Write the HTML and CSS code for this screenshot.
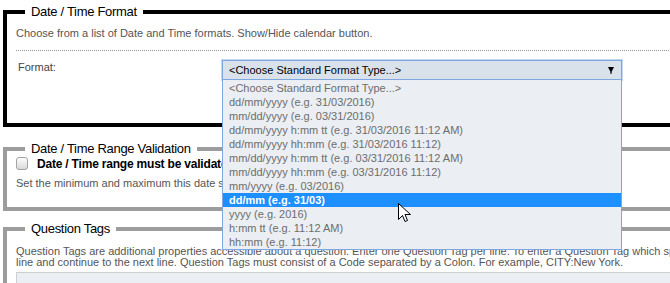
FILE: index.html
```html
<!DOCTYPE html>
<html lang="en">
<head>
  <meta charset="UTF-8">
  <meta content="width=device-width, initial-scale=1.0" name="viewport">
  <title>Date / Time question</title>
  <link rel="stylesheet" href="styles.css">
</head>
<body>
<main class="editor">
  <fieldset class="panel panel--active">
    <legend>Date / Time Format</legend>
    <p class="hint">Choose from a list of Date and Time formats. Show/Hide calendar button.</p>
    <hr class="rule">
    <div class="field">
      <label for="format">Format:</label>
      <div class="dropdown">
        <button class="dropdown-toggle" id="format" type="button">
          <span>&lt;Choose Standard Format Type...&gt;</span>
          <svg xmlns="http://www.w3.org/2000/svg" width="6" height="7" viewBox="0 0 6 7"><path d="M0 0h6L3 6z"/><path d="M2.5 5h1v2h-1z"/></svg>
        </button>
        <ul class="dropdown-list">
          <li>&lt;Choose Standard Format Type...&gt;</li>
          <li>dd/mm/yyyy (e.g. 31/03/2016)</li>
          <li>mm/dd/yyyy (e.g. 03/31/2016)</li>
          <li>dd/mm/yyyy h:mm tt (e.g. 31/03/2016 11:12 AM)</li>
          <li>dd/mm/yyyy hh:mm (e.g. 31/03/2016 11:12)</li>
          <li>mm/dd/yyyy h:mm tt (e.g. 03/31/2016 11:12 AM)</li>
          <li>mm/dd/yyyy hh:mm (e.g. 03/31/2016 11:12)</li>
          <li>mm/yyyy (e.g. 03/2016)</li>
          <li class="is-hover">dd/mm (e.g. 31/03)</li>
          <li>yyyy (e.g. 2016)</li>
          <li>h:mm tt (e.g. 11:12 AM)</li>
          <li>hh:mm (e.g. 11:12)</li>
        </ul>
        <svg class="pointer" xmlns="http://www.w3.org/2000/svg" width="13" height="20" viewBox="0 0 13 20"><path d="M0.5 0.5v16l4-4 2.5 6 2.5-1-2.5-6h5.5z" fill="#fff" stroke="#000"/></svg>
      </div>
    </div>
  </fieldset>

  <fieldset class="panel">
    <legend>Date / Time Range Validation</legend>
    <label class="check">
      <input type="checkbox">
      Date / Time range must be validated
    </label>
    <p class="hint hint--spaced">Set the minimum and maximum this date should be.</p>
  </fieldset>

  <fieldset class="panel">
    <legend>Question Tags</legend>
    <p class="hint hint--tight">Question Tags are additional properties accessible about a question. Enter one Question Tag per line. To enter a Question Tag which spans more than one<br>line and continue to the next line. Question Tags must consist of a Code separated by a Colon. For example, CITY:New York.</p>
    <textarea class="tags" rows="3"></textarea>
  </fieldset>
</main>
</body>
</html>
```

FILE: styles.css
```css
* {
  box-sizing: border-box;
}

html,
body {
  overflow: hidden;
}

body {
  background: #fff;
  color: #555;
  font-family: Arial, "Liberation Sans", sans-serif;
  font-size: 11px;
  margin: 0;
  padding-top: 4px;
}

.editor {
  width: 1000px;
}

.panel {
  border: 4px solid #9c9c9c;
  margin: 0 0 10px 3px;
  min-width: 0;
  padding: 0 9px 17px;

  & legend {
    color: #000;
    font-size: 13px;
    letter-spacing: -0.3px;
    line-height: 16px;
    margin-left: 9px;
    padding: 0 6px;
  }
}

.panel--active {
  border-color: #000;
  margin-bottom: 14px;
  padding-bottom: 43px;
}

.hint {
  line-height: 14px;
  margin: 6px 0 0;
}

.hint--tight {
  line-height: 11px;
  margin-top: 9px;
}

.rule {
  border: 0;
  border-top: 1px dotted #999;
  margin: 10px 0 9px;
}

.field {
  align-items: start;
  display: grid;
  grid-template-columns: 206px 400px;

  & label {
    color: #444;
    line-height: 13px;
    padding: 1px 0 0 2px;
  }
}

.dropdown {
  position: relative;
}

.dropdown-toggle {
  align-items: center;
  background: #d9e1ea;
  border: 1px solid #7ea7e0;
  box-shadow: 0 0 0 1px #c4d7f2;
  color: #000;
  display: flex;
  font: inherit;
  height: 20px;
  justify-content: space-between;
  padding: 0 7px 0 6px;
  width: 100%;
}

.dropdown-list {
  background: #ebeef2;
  border: 1px solid #7ea7e0;
  border-top: 0;
  color: #6d6d6d;
  left: 0;
  line-height: 14px;
  list-style: none;
  margin: 0;
  padding: 1px 0 0;
  position: absolute;
  top: 100%;
  width: 100%;
  z-index: 2;

  & li {
    padding: 0 6px;
    white-space: nowrap;
  }

  & .is-hover {
    background: #1e8fff;
    color: #fff;
    font-weight: bold;
  }
}

.pointer {
  left: 176px;
  position: absolute;
  top: 143px;
  z-index: 3;
}

.check {
  align-items: center;
  color: #000;
  display: flex;
  font-size: 12px;
  font-weight: bold;
  gap: 9px;
  height: 13px;
  letter-spacing: -0.2px;

  & input {
    appearance: none;
    background: linear-gradient(#fdfdfd, #d9d9d9);
    border: 1px solid #a3a3a3;
    border-radius: 3px;
    height: 13px;
    margin: 0;
    width: 12px;
  }
}

.hint--spaced {
  margin-top: 6px;
}

.tags {
  background: #ebeef2;
  border: 1px solid #cfcfcf;
  display: block;
  height: 40px;
  margin-top: 4px;
  resize: none;
  width: 100%;
}
```
